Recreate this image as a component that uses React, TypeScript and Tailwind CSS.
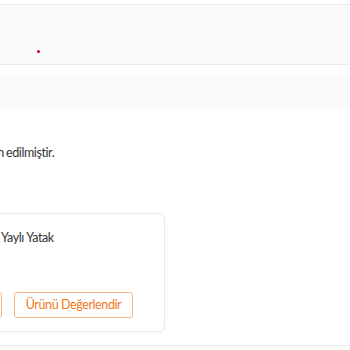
export default function App() {
  return (
    <div className="w-[350px] h-[350px] overflow-hidden bg-white text-[#333] font-['Lato',sans-serif] tracking-[-0.4px]">
      <div className="pt-[4px]">
        <div className="h-[61px] border-y border-[#ebebeb] bg-[#fafafa] pl-[37px] pt-[45px]">
          <div className="w-[3px] h-[3px] rounded-full bg-[#d0021b]" />
        </div>
      </div>
      <div className="mt-[11px] h-[32px] bg-[#fafafa]" />

      <div className="mt-[36px] flex items-center h-[18px] text-[12.5px] whitespace-nowrap">
        <div className="flex justify-end w-[4px] shrink-0">
          <span>Siparişiniz teslim</span>
        </div>
        <span className="ml-[2px]">edilmiştir.</span>
      </div>

      <div className="mt-[51px] -ml-[40px] w-[205px] h-[119px] rounded-md border border-[#ebebeb] bg-white shadow-[0_1px_3px_rgba(0,0,0,0.04)] pl-[40px] pt-[15px]">
        <div className="flex items-center h-[18px] text-[12.5px] whitespace-nowrap">
          <div className="flex justify-end w-[0px] -ml-[4px] shrink-0">
            <span>Yataş Ortopedik</span>
          </div>
          <span className="ml-[4px]">Yaylı Yatak</span>
        </div>
        <div className="mt-[45px] flex gap-[12px]">
          <div className="flex justify-end w-[1px] shrink-0">
            <button className="h-[26px] px-[16px] rounded-[3px] border border-[#f5b88a] text-[#f27a1a] text-[12.5px] whitespace-nowrap">
              Tekrar Al
            </button>
          </div>
          <button className="h-[26px] w-[119px] rounded-[3px] border border-[#f5b88a] text-[#f27a1a] text-[12.5px] whitespace-nowrap">
            Ürünü Değerlendir
          </button>
        </div>
      </div>

      <div className="mt-[13px] h-[20px] border-t border-[#ebebeb] bg-[#fafafa]" />
    </div>
  );
}
